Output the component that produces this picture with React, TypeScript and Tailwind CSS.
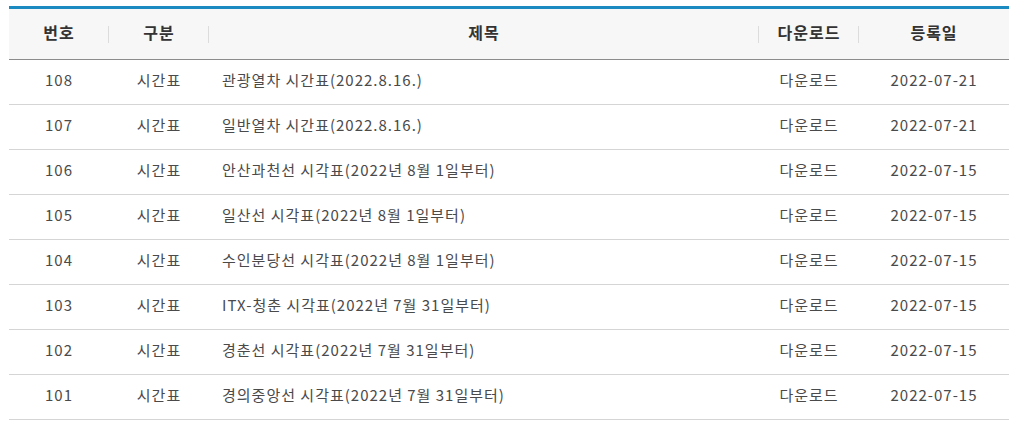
import React from 'react';

const rows = [
  { no: 108, title: '관광열차 시간표(2022.8.16.)', date: '2022-07-21' },
  { no: 107, title: '일반열차 시간표(2022.8.16.)', date: '2022-07-21' },
  { no: 106, title: '안산과천선 시각표(2022년 8월 1일부터)', date: '2022-07-15' },
  { no: 105, title: '일산선 시각표(2022년 8월 1일부터)', date: '2022-07-15' },
  { no: 104, title: '수인분당선 시각표(2022년 8월 1일부터)', date: '2022-07-15' },
  { no: 103, title: 'ITX-청춘 시각표(2022년 7월 31일부터)', date: '2022-07-15' },
  { no: 102, title: '경춘선 시각표(2022년 7월 31일부터)', date: '2022-07-15' },
  { no: 101, title: '경의중앙선 시각표(2022년 7월 31일부터)', date: '2022-07-15' },
];

function HeadCell({ label, divider = true }: { label: string; divider?: boolean }) {
  return (
    <th className="relative h-[52px] p-0 pb-[4px] text-center text-[16px] font-bold tracking-[1px] text-[#333]">
      {label}
      {divider && <span className="absolute right-0 top-[17px] h-[17px] w-px bg-[#dcdcdc]" />}
    </th>
  );
}

export default function App() {
  return (
    <div className="min-h-screen bg-white pl-[9px] pt-[6px] font-['Noto_Sans_CJK_KR','Noto_Sans',sans-serif]">
      <table className="w-[1000px] table-fixed border-collapse border-t-[3px] border-[#1a8ac0]">
        <colgroup>
          <col className="w-[100px]" />
          <col className="w-[100px]" />
          <col className="w-[550px]" />
          <col className="w-[100px]" />
          <col className="w-[150px]" />
        </colgroup>
        <thead>
          <tr className="border-b border-[#8c8c8c] bg-[#f7f7f7]">
            <HeadCell label="번호" />
            <HeadCell label="구분" />
            <HeadCell label="제목" />
            <HeadCell label="다운로드" />
            <HeadCell label="등록일" divider={false} />
          </tr>
        </thead>
        <tbody className="text-[15px] tracking-[1px] text-[#4a4a4a]">
          {rows.map((r) => (
            <tr key={r.no} className="h-[45px] border-b border-[#d5d5d5]">
              <td className="p-0 pb-[3px] text-center">{r.no}</td>
              <td className="p-0 pb-[3px] text-center">시간표</td>
              <td className="p-0 pb-[3px] pl-[13px] text-left">{r.title}</td>
              <td className="p-0 pb-[3px] text-center">다운로드</td>
              <td className="p-0 pb-[3px] text-center">{r.date}</td>
            </tr>
          ))}
        </tbody>
      </table>
    </div>
  );
}
